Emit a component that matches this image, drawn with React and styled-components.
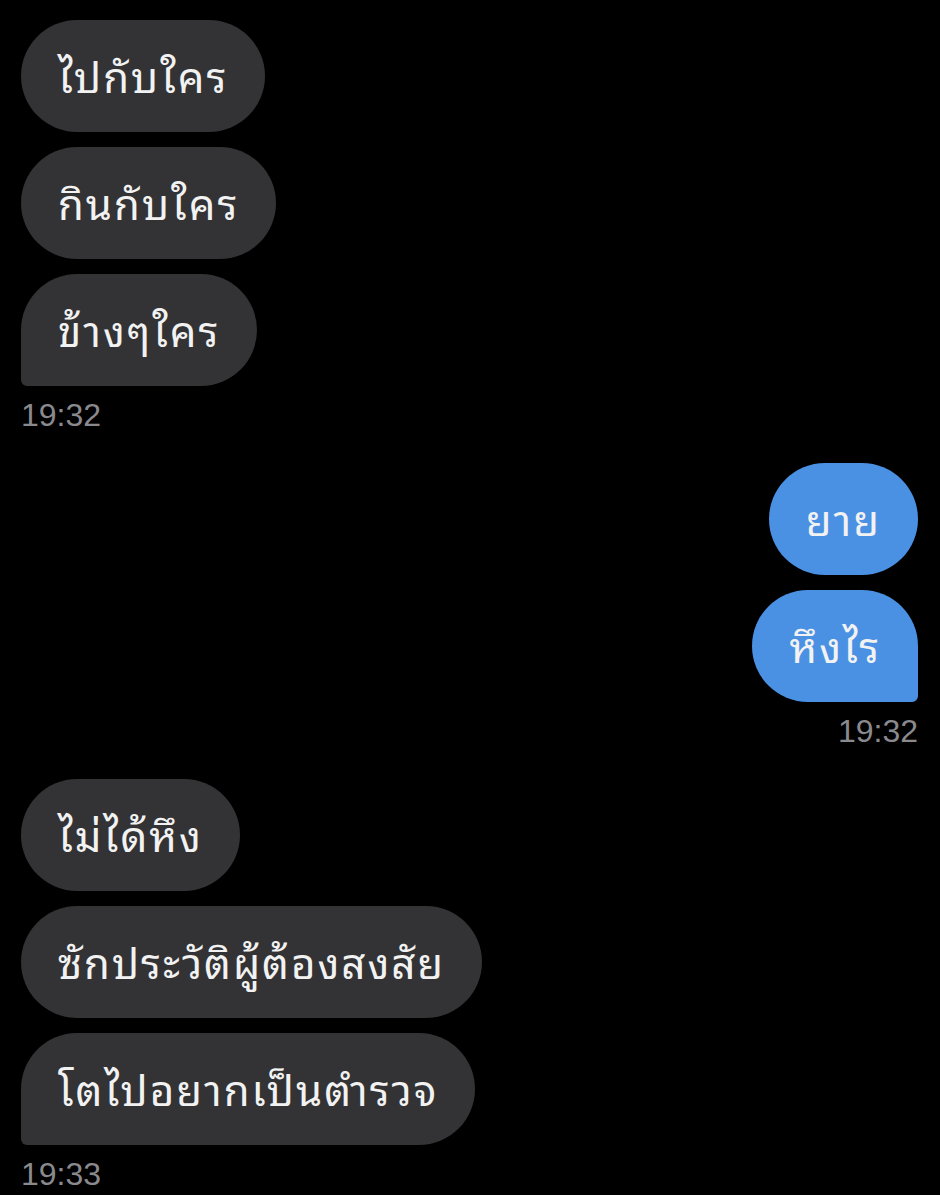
import React from 'react';
import styled, { createGlobalStyle } from 'styled-components';

const groups = [
    { side: 'left', time: '19:32', messages: ['ไปกับใคร', 'กินกับใคร', 'ข้างๆใคร'] },
    { side: 'right', time: '19:32', messages: ['ยาย', 'หึงไร'] },
    { side: 'left', time: '19:33', messages: ['ไม่ได้หึง', 'ซักประวัติผู้ต้องสงสัย', 'โตไปอยากเป็นตำรวจ'] },
];

const App = () => {
    return (
        <>
            <GlobalStyle />
            <Chat>
                {groups.map((group, gi) => (
                    <Group key={gi} $side={group.side}>
                        {group.messages.map((text, i) => (
                            <Bubble
                                key={i}
                                $side={group.side}
                                $tail={i === group.messages.length - 1}
                            >
                                {text}
                            </Bubble>
                        ))}
                        <Time>{group.time}</Time>
                    </Group>
                ))}
            </Chat>
        </>
    );
};

export default App;

const GlobalStyle = createGlobalStyle`
    html, body {
        margin: 0;
        background: #000;
    }
`

const Chat = styled.div`
    display: flex;
    flex-direction: column;
    gap: 31px;
    padding: 20px 22px 0 21px;
    min-height: 1195px;
    box-sizing: border-box;
    background: #000;
    font-family: "Noto Sans Thai Looped", Thonburi, Loma, Garuda, "Tlwg Typo", "Noto Sans Thai", "Noto Sans", sans-serif;
`

const Group = styled.div`
    display: flex;
    flex-direction: column;
    align-items: ${p => (p.$side === 'right' ? 'flex-end' : 'flex-start')};
    gap: 15px;
`

const Bubble = styled.div`
    height: 112px;
    box-sizing: border-box;
    display: flex;
    align-items: center;
    padding: 0 37px 4px;
    font-size: 42px;
    letter-spacing: 2px;
    color: #f2f2f2;
    background: ${p => (p.$side === 'right' ? '#4a91e4' : '#333335')};
    border-radius: ${p => {
        if (!p.$tail) return '56px';
        return p.$side === 'right' ? '56px 56px 6px 56px' : '56px 56px 56px 6px';
    }};
`

const Time = styled.div`
    margin-top: -3px;
    font-family: "Liberation Sans", Arial, sans-serif;
    font-size: 32px;
    line-height: 34px;
    color: #8a8a8e;
`
